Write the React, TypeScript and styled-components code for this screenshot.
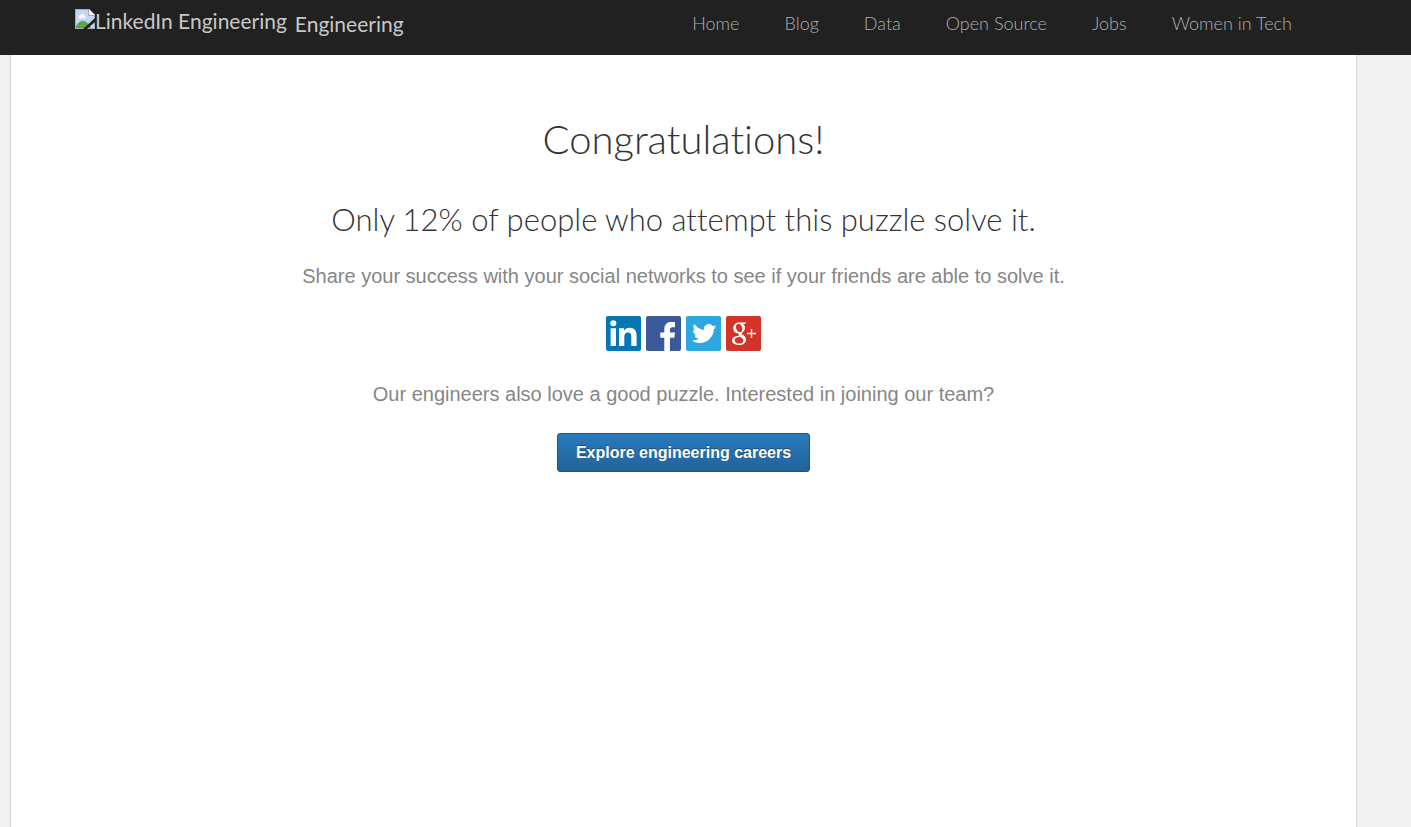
import React from "react";
import styled, { createGlobalStyle } from "styled-components";

const GlobalStyle = createGlobalStyle`
  * { box-sizing: border-box; }
  html { background: #f1f1f1; }
  body {
    margin: 0;
    font-family: "Liberation Sans", Arial, sans-serif;
    color: #333;
  }
`;

const light = `
  font-family: Lato, "Avenir Next", sans-serif;
  font-weight: 300;
  font-variant-ligatures: none;
`;

const Page = styled.div`
  min-height: 100vh;
  display: flex;
  flex-direction: column;
`;

const Header = styled.header`
  height: 55px;
  padding: 0 119px 0 75px;
  display: flex;
  justify-content: space-between;
  align-items: flex-start;
  background: #212121;
`;

const Brand = styled.a`
  ${light}
  font-weight: 400;
  display: flex;
  align-items: flex-start;
  gap: 8px;
  padding-top: 9px;
  color: #c8c8c8;
  font-size: 21px;
  line-height: 24px;
  text-decoration: none;
  white-space: nowrap;
`;

const LogoAlt = styled.span`
  display: flex;
  align-items: flex-start;
`;

const BrandName = styled.span`
  padding-top: 3px;
`;

const Nav = styled.nav`
  display: flex;
  gap: 45px;
  padding-top: 11px;
`;

const NavLink = styled.a`
  ${light}
  color: #b0b0b0;
  font-size: 18px;
  line-height: 24px;
  text-decoration: none;
  white-space: nowrap;
`;

const Content = styled.main`
  flex: 1;
  margin: 0 54px 0 10px;
  padding: 60px 20px 40px;
  display: flex;
  flex-direction: column;
  align-items: center;
  text-align: center;
  background: #fff;
  border: solid #d9d9d9;
  border-width: 0 1px;
`;

const Title = styled.h1`
  ${light}
  margin: 0;
  font-size: 40px;
  line-height: 48px;
`;

const Subtitle = styled.h2`
  ${light}
  margin: 36px 0 0;
  font-size: 31px;
  line-height: 40px;
`;

const Text = styled.p`
  margin: 25px 0 0;
  color: #868686;
  font-size: 20px;
  line-height: 24px;
`;

const ShareList = styled.div`
  display: flex;
  gap: 5px;
  margin: 28px 0 6px;
`;

const ShareLink = styled.a<{ $color: string }>`
  width: 35px;
  height: 35px;
  border-radius: 2px;
  overflow: hidden;
  background: ${(p) => p.$color};

  svg { display: block; }
`;

const CareersButton = styled.button`
  height: 39px;
  margin-top: 27px;
  padding: 0 18px;
  border: 1px solid #1d5480;
  border-radius: 3px;
  background: linear-gradient(#287bbc, #23639a);
  color: #fff;
  font: bold 16px/24px "Liberation Sans", Arial, sans-serif;
  text-shadow: 0 -1px 1px rgba(0, 0, 0, 0.35);
  cursor: pointer;
`;

const BrokenImage = () => (
  <svg width="20" height="20" viewBox="0 0 20 20" aria-hidden="true">
    <path d="M0 0H14L20 6V20H0Z" fill="#a9adb2" />
    <path d="M1 1H13V7H19V19H1Z" fill="#c5d6f3" />
    <path d="M4 9.500a2 2 0 0 1 1-3 2.500 2.500 0 0 1 4.500 0 2 2 0 0 1 .5 3Z" fill="#f5f8fe" />
    <path d="M1 17Q5 11 9 12Q13 13 16 19H1Z" fill="#58a745" />
    <path d="M14 0V6H20Z" fill="#f2f2f2" />
    <path d="M20 9V13L12 20H8Z" fill="#212121" />
  </svg>
);

const shares = [
  {
    name: "LinkedIn",
    color: "#0377b3",
    art: (
      <>
        <circle cx="7.300" cy="7.200" r="3" />
        <path d="M4.600 12.200H10V30H4.600ZM13 12.200H18V14.700C19.200 12.800 21 11.800 23.400 11.800C28.600 11.800 30.600 15 30.600 19.600V30H25.300V20.800C25.300 18 24.400 16.500 22.100 16.500C19.400 16.500 18.300 18.200 18.300 20.800V30H13Z" />
      </>
    ),
  },
  {
    name: "Facebook",
    color: "#3b5998",
    art: <path d="M18.300 35V21.800H14.300V16.600H18.300V13.200C18.300 8.700 20.800 6 25.300 6H29V11.200H26.500C24.600 11.200 24 12 24 13.800V16.600H29L28.300 21.800H24V35Z" />,
  },
  {
    name: "Twitter",
    color: "#2ca7df",
    art: (
      <g transform="translate(6 5.500) rotate(4 12 12)">
        <path d="M23.900 4.600a10 10 0 0 1-2.800.8 4.900 4.900 0 0 0 2.100-2.700 9.800 9.800 0 0 1-3.100 1.200A4.900 4.900 0 0 0 11.700 8.400 14 14 0 0 1 1.600 3.200a4.900 4.900 0 0 0 1.500 6.600 4.800 4.800 0 0 1-2.200-.6v.1a4.900 4.900 0 0 0 3.900 4.800 5 5 0 0 1-2.200.1 4.900 4.900 0 0 0 4.600 3.400A9.900 9.900 0 0 1 0 19.600a13.900 13.900 0 0 0 7.500 2.200c9.100 0 14-7.500 14-14v-.6a10 10 0 0 0 2.400-2.600Z" />
      </g>
    ),
  },
  {
    name: "Google+",
    color: "#d2342a",
    art: (
      <>
        <path
          fillRule="evenodd"
          d="M13 6.500H20.500L18.800 8H16.700C18.300 9 19 10.300 19 12C19 14 17.800 15.300 16.600 16.200C15.600 17 15.600 17.900 16.700 18.700C18.700 20.100 20 21.300 20 23.700C20 26.700 17.300 29 12.800 29C8.800 29 6 27.400 6 24.600C6 21.600 9 20 13.200 19.800C12.500 19 12.400 18.200 12.800 17.500C9.400 17.600 7.300 15.300 7.300 12.300C7.300 9 9.800 6.500 13 6.500ZM12.600 7.700C10.900 7.700 10 9 10 10.800C10 13.500 11.600 16.300 13.800 16.300C15.500 16.300 16.300 15 16.300 13.200C16.300 10.600 14.900 7.700 12.600 7.700ZM13.800 21C10.800 21 8.700 22 8.700 24.200C8.700 26.300 10.700 27.600 13.400 27.600C16 27.600 17.400 26.500 17.400 24.700C17.400 23.100 16.200 22.400 14.600 21.100Z"
        />
        <path d="M21 17.500H30M25.500 13V22" fill="none" stroke="#fff" strokeWidth="1.400" />
      </>
    ),
  },
];

const navItems = ["Home", "Blog", "Data", "Open Source", "Jobs", "Women in Tech"];

export default function App() {
  return (
    <Page>
      <GlobalStyle />
      <Header>
        <Brand href="#home">
          <LogoAlt>
            <BrokenImage />
            LinkedIn Engineering
          </LogoAlt>
          <BrandName>Engineering</BrandName>
        </Brand>
        <Nav>
          {navItems.map((item) => (
            <NavLink key={item} href="#">{item}</NavLink>
          ))}
        </Nav>
      </Header>
      <Content>
        <Title>Congratulations!</Title>
        <Subtitle>Only 12% of people who attempt this puzzle solve it.</Subtitle>
        <Text>Share your success with your social networks to see if your friends are able to solve it.</Text>
        <ShareList>
          {shares.map((s) => (
            <ShareLink key={s.name} href="#" aria-label={`Share on ${s.name}`} $color={s.color}>
              <svg width="35" height="35" viewBox="0 0 35 35" fill="#fff">{s.art}</svg>
            </ShareLink>
          ))}
        </ShareList>
        <Text>Our engineers also love a good puzzle. Interested in joining our team?</Text>
        <CareersButton type="button">Explore engineering careers</CareersButton>
      </Content>
    </Page>
  );
}
